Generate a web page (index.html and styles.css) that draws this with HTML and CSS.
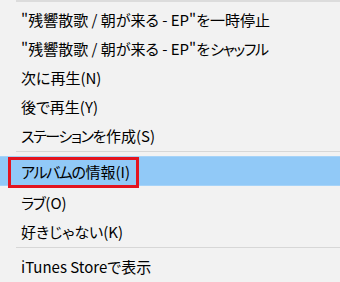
FILE: index.html
```html
<!DOCTYPE html>
<html lang="ja">
<head>
<meta charset="utf-8">
<link rel="stylesheet" href="styles.css">
</head>
<body>
<div class="menu">
  <div class="top-line"></div>
  <div class="item">"残響散歌 / 朝が来る - EP"を一時停止</div>
  <div class="item">"残響散歌 / 朝が来る - EP"を<span class="kana">シャッフル</span></div>
  <div class="item">次に再生(N)</div>
  <div class="item">後で再生(Y)</div>
  <div class="item"><span class="kana">ステーションを</span>作成(S)</div>
  <div class="sep"></div>
  <div class="item item-active"><span class="kana">アルバムの</span>情報(I)<span class="mark"></span></div>
  <div class="item item-after"><span class="kana">ラブ</span>(O)</div>
  <div class="item">好きじゃない(K)</div>
  <div class="sep"></div>
  <div class="item">iTunes Storeで表示</div>
</div>
</body>
</html>
```
FILE: styles.css
```css
html, body {
  margin: 0;
  padding: 0;
  background: #f2f2f2;
}
.menu {
  width: 340px;
  height: 282px;
  overflow: hidden;
  background: #f2f2f2;
  font-family: "Noto Sans CJK JP", "Noto Sans", sans-serif;
  font-size: 15px;
  font-feature-settings: "palt";
  color: #000;
}
.top-line {
  margin-left: 16px;
  height: 0;
  border-top: 2px solid #dcdcdc;
  margin-bottom: 3px;
}
.item {
  position: relative;
  height: 29px;
  display: flex;
  align-items: center;
  padding-left: 21px;
  white-space: nowrap;
}
.kana {
  letter-spacing: -1.4px;
  margin-right: 1px;
}
.item-active {
  height: 30px;
  background: #91c9f7;
  box-shadow: inset 0 1px 0 #a6d3f8, inset 0 -1px 0 #a6d3f8;
}
.item-after {
  margin-top: 2px;
}
.sep {
  margin-left: 16px;
  height: 0;
  margin-top: 1px;
  border-top: 1px solid #d7d7d7;
  margin-bottom: 4px;
}
.mark {
  position: absolute;
  left: 8px;
  top: 1px;
  width: 125px;
  height: 25px;
  border: 3px solid #e3141f;
}
```
